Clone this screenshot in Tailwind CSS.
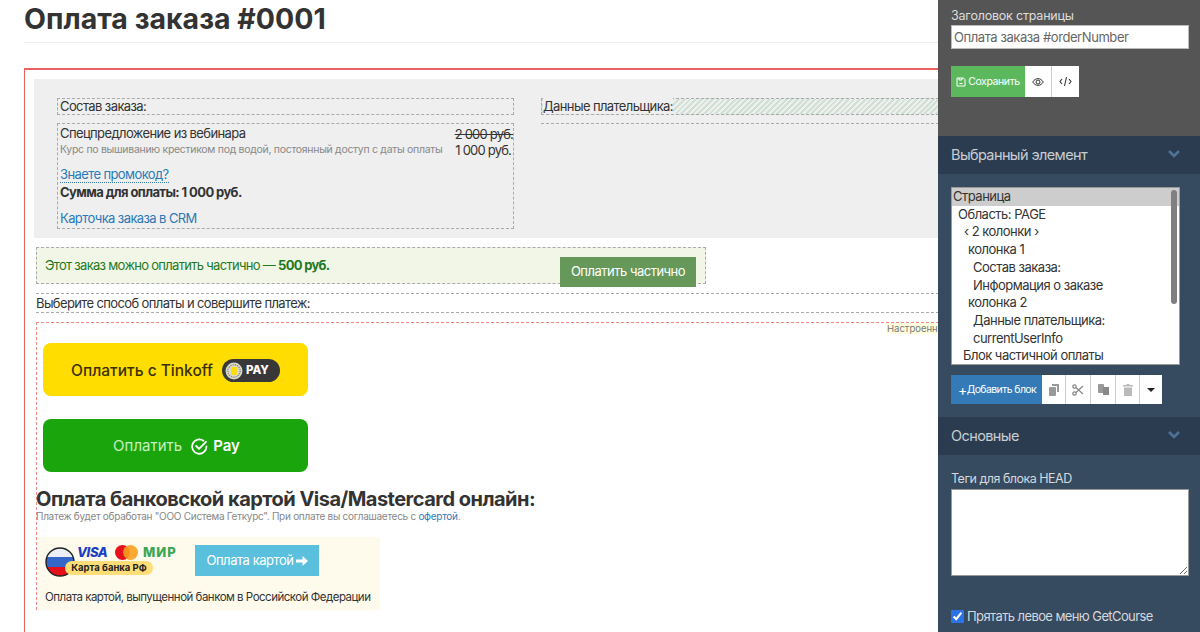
<!DOCTYPE html>
<html lang="ru">
<head>
    <meta charset="UTF-8">
    <title>Оплата заказа</title>
    <script src="https://cdn.jsdelivr.net/npm/@tailwindcss/browser@4"></script>
</head>
<body class="bg-white font-['Inter','Noto_Sans',sans-serif] text-[#333]">
<div class="flex h-[632px] w-[1200px] overflow-hidden">

    <!-- Page content -->
    <main class="h-full w-[938px] shrink-0 overflow-hidden pl-6">
        <h1 class="h-[43px] border-b border-[#eee] text-[28.5px] leading-[37px] font-bold text-[#333]">Оплата заказа #0001</h1>

        <!-- Red page area -->
        <div class="mt-[25px] h-[600px] w-[1000px] border-t-2 border-l border-[#ee5f5f] pt-[9px] pl-[9px]">
            <!-- Two columns -->
            <div class="flex h-[159px] bg-[#efefef] pt-[19px] pl-[23px]">
                <div class="w-[457px] shrink-0 tracking-[-0.6px]">
                    <div class="h-[17px] border border-dashed border-[#aaa] pl-[2px] text-[13px] leading-[15px] text-[#333]">Состав заказа:</div>
                    <div class="relative mt-2 h-[106px] border border-dashed border-[#aaa] pl-[2px]">
                        <div class="text-[13px] leading-[18px]">Спецпредложение из вебинара</div>
                        <div class="mt-[1px] text-[10.5px] leading-[13px] tracking-[-0.3px] text-[#888]">Курс по вышиванию крестиком под водой, постоянный доступ с даты оплаты</div>
                        <div class="absolute top-[1px] right-0 text-[13px] leading-[18px] tracking-[-0.8px] line-through">2 000 руб.</div>
                        <div class="absolute top-[17px] right-[2px] text-[13px] leading-[18px] tracking-[-0.8px]">1 000 руб.</div>
                        <a class="mt-[11px] block w-fit border-b border-dotted border-[#337ab7] text-[13px] leading-[15px] text-[#2a7ab8]" href="#">Знаете промокод?</a>
                        <div class="text-[13px] leading-[18px] font-bold">Сумма для оплаты: 1 000 руб.</div>
                        <a class="mt-[9px] block text-[13px] leading-[16px] text-[#2a7ab8]" href="#">Карточка заказа в CRM</a>
                    </div>
                </div>
                <div class="ml-[27px] flex-1 tracking-[-0.6px]">
                    <div class="h-[17px] border border-dashed border-[#aaa] bg-[repeating-linear-gradient(135deg,#cfe0d4_0px,#cfe0d4_2px,#efefef_2px,#efefef_4px)] pl-[1px] text-[13px] leading-[15px]"><span class="bg-[#efefef]">Данные плательщика:</span></div>
                    <div class="mt-2 h-0 border-t border-dashed border-[#aaa]"></div>
                </div>
            </div>

            <!-- Partial payment -->
            <div class="mt-[9px] ml-[2px] flex h-[37px] w-[670px] border border-dashed border-[#aaa] bg-[#f2f6e7] pl-2 text-[#1f7a1f]">
                <div class="pt-[9px] text-[13px] leading-4 tracking-[-0.7px]">Этот заказ можно оплатить частично — <b>500 руб.</b></div>
                <button class="absolute mt-[9px] ml-[515px] h-[30px] w-[136px] bg-[#66985a] text-[13px] tracking-[-0.5px] text-white">Оплатить частично</button>
            </div>

            <div class="mt-[9px] ml-[2px] h-5 border-y border-dashed border-[#aaa] text-[13px] leading-[18px] tracking-[-0.62px] text-[#333]">Выберите способ оплаты и совершите платеж:</div>

            <!-- Payment widgets -->
            <div class="relative mt-[9px] ml-[2px] border-t border-l border-dashed border-[#f08a8a] pt-[20px] pl-[6px]">
                <span class="absolute top-0 left-[849px] bg-[#ffffe0] px-[1px] text-[9.5px] leading-[11px] whitespace-nowrap text-[#777]">Настроенные</span>

                <div class="flex h-[53px] w-[265px] items-center justify-center gap-[9px] rounded-lg bg-[#ffdd00] pt-[2px] text-[15.500px] font-medium text-[#3b3000]">
                    Оплатить с Tinkoff
                    <span class="flex h-[23px] w-[58px] items-center gap-[3px] rounded-full bg-[#383838] pl-[3px] text-[11.500px] font-extrabold text-white">
                        <svg width="18" height="18" viewBox="0 0 16 16"><circle cx="8" cy="8" r="7.5" fill="#d8d8c8"/><circle cx="8" cy="8" r="5.5" fill="none" stroke="#777" stroke-dasharray="1 1"/><rect x="5.5" y="4.5" width="5" height="7" fill="#ffdd00"/></svg>
                        PAY
                    </span>
                </div>

                <div class="mt-[23px] flex h-[53px] w-[265px] items-center justify-center rounded-lg bg-[#1aa50c] pt-[1px] pl-[2px] text-[15px] text-[#c5f0c0]">
                    Оплатить
                    <svg class="mr-1 ml-2" width="19" height="19" viewBox="0 0 19 19" fill="none" stroke="#fff" stroke-width="1.8" stroke-linecap="round" stroke-linejoin="round"><path d="M16.5 9.5a7.2 7.2 0 1 1-3-5.8"/><path d="M6.2 9l2.8 2.8 7-7"/></svg>
                    <span class="font-semibold text-white">Pay</span>
                </div>

                <h2 class="mt-4 -ml-[7px] text-[20px] leading-[22px] font-bold tracking-[-0.52px] whitespace-nowrap">Оплата банковской картой Visa/Mastercard онлайн:</h2>
                <p class="-ml-[7px] text-[10px] leading-3 tracking-[-0.28px] text-[#888]">Платеж будет обработан "ООО Система Геткурс". При оплате вы соглашаетесь с <a class="text-[#337ab7]" href="#">офертой</a>.</p>

                <!-- Card payment -->
                <div class="mt-[15px] -ml-[6px] h-[73px] w-[343px] bg-[#fffbec] pt-2 pl-2">
                    <div class="flex items-center">
                        <div class="relative h-[31px] w-[148px] shrink-0">
                            <svg class="absolute top-[2px] left-0" width="30" height="30" viewBox="0 0 30 30"><defs><clipPath id="flag"><circle cx="15" cy="15" r="14"/></clipPath></defs><g clip-path="url(#flag)"><rect width="30" height="10" fill="#eceff5"/><rect y="10" width="30" height="10" fill="#3467c8"/><rect y="20" width="30" height="10" fill="#e5101a"/></g><circle cx="15" cy="15" r="14" fill="none" stroke="#222" stroke-width="1.4"/></svg>
                            <span class="absolute top-0 left-[32px] text-[13px] leading-[15px] font-extrabold tracking-[-0.4px] text-[#1a3fc4] italic">VISA</span>
                            <span class="absolute top-0 left-[70px] h-[15px] w-[15px] rounded-full bg-[#e8101c]"></span>
                            <span class="absolute top-0 left-[78px] h-[15px] w-[15px] rounded-full bg-[#f9a01e]/90"></span>
                            <span class="absolute top-0 left-[98px] text-[13px] leading-[15px] font-extrabold tracking-[1px] text-[#3aa655]">МИР</span>
                            <span class="absolute top-[16px] left-[20px] h-[14px] w-[88px] rounded-full bg-[#ffdd77] text-center text-[9.5px] leading-[14px] font-bold text-[#222]">Карта банка РФ</span>
                        </div>
                        <button class="ml-[2px] flex h-[31px] w-[124px] items-center justify-center gap-[2px] bg-[#5bc0de] pt-[1px] text-[13px] tracking-[-0.45px] text-white">Оплата картой
                            <svg width="12" height="10" viewBox="0 0 12 10" fill="#fff"><path d="M0 3.5h6.5V0L12 5l-5.500 5V6.500H0z"/></svg>
                        </button>
                    </div>
                    <p class="mt-[13px] text-[11.5px] leading-4 tracking-[-0.5px] whitespace-nowrap text-[#333]">Оплата картой, выпущенной банком в Российской Федерации</p>
                </div>
            </div>
        </div>
    </main>

    <!-- Settings panel -->
    <aside class="h-full w-[262px] shrink-0 bg-[#364a60] text-[#d5d9dd]">
        <div class="h-[136px] bg-[#555] px-[13px] pt-[8px]">
            <label class="block text-[12.5px] leading-[15px] tracking-[-0.2px] text-[#ddd]">Заголовок страницы</label>
            <input class="mt-[2px] h-[24px] w-[238px] border border-[#bbb] bg-white px-[2px] text-[13px] tracking-[-0.42px] text-[#666]" value="Оплата заказа #orderNumber">
            <div class="mt-[17px] flex h-[31px]">
                <button class="flex w-[74px] items-center justify-center gap-[2px] bg-[#5cb85c] text-[10.5px] tracking-[-0.4px] text-white">
                    <svg width="10" height="10" viewBox="0 0 10 10" fill="none" stroke="#fff"><path d="M1 1h6.500L9 2.500V9H1z"/><path d="M3 1v2h3V1M3.500 6.500h3" /></svg>
                    Сохранить
                </button>
                <button class="flex w-[27px] items-center justify-center border-r border-[#ccc] bg-white">
                    <svg width="12" height="10" viewBox="0 0 12 10" fill="none" stroke="#333"><path d="M.7 5C3.500.5 8.500.5 11.300 5 8.500 9.500 3.500 9.500.7 5z"/><circle cx="6" cy="5" r="2"/></svg>
                </button>
                <button class="flex w-[27px] items-center justify-center bg-white">
                    <svg width="13" height="11" viewBox="0 0 13 11" fill="none" stroke="#333" stroke-width="1.1"><path d="M3 3L1 5.500 3 8M10 3l2 2.500L10 8M7.500 1L5.500 10"/></svg>
                </button>
            </div>
        </div>

        <div class="flex h-[38px] items-center justify-between bg-[#2c3c50] pr-[20px] pl-[13px] text-[14.5px] tracking-[-0.6px] text-[#c8cdd3]">
            Выбранный элемент
            <svg class="mb-[3px]" width="12" height="8" viewBox="0 0 12 8" fill="none" stroke="#4f7299" stroke-width="2.600"><path d="M1 1l5 5 5-5"/></svg>
        </div>
        <div class="h-[243px] px-[13px] pt-[13px]">
            <!-- Tree select -->
            <div class="relative h-[178px] w-[229px] overflow-hidden border border-[#999] bg-white text-[13px] leading-[17.700px] tracking-[-0.5px] text-[#333]">
                <div class="bg-[#cdcdcd] pl-[1px]">Страница</div>
                <div class="pl-[6px]">Область: PAGE</div>
                <div class="pl-[12px]">‹ 2 колонки ›</div>
                <div class="pl-[16px]">колонка 1</div>
                <div class="pl-[21px]">Состав заказа:</div>
                <div class="pl-[21px]">Информация о заказе</div>
                <div class="pl-[16px]">колонка 2</div>
                <div class="pl-[21px]">Данные плательщика:</div>
                <div class="pl-[21px]">currentUserInfo</div>
                <div class="pl-[11px]">Блок частичной оплаты</div>
                <span class="absolute top-[2px] right-[2px] h-[114px] w-[6px] rounded-full bg-[#808080]"></span>
            </div>
            <div class="mt-[10px] flex h-[29px]">
                <button class="flex w-[91px] items-center bg-[#337ab7] pl-[7px] text-[10.500px] tracking-[-0.6px] whitespace-nowrap text-white"><span class="text-[14px] leading-none">+</span>Добавить блок</button>
                <button class="flex w-[24px] items-center justify-center border-r border-[#ccc] bg-white">
                    <svg width="10" height="12" viewBox="0 0 10 12" fill="#999"><path d="M3 0h7v8H8V2H3z"/><rect y="3" width="7" height="9" rx="1"/></svg>
                </button>
                <button class="flex w-[25px] items-center justify-center border-r border-[#ccc] bg-white">
                    <svg width="12" height="12" viewBox="0 0 12 12" fill="none" stroke="#888" stroke-width="1.200"><circle cx="2.500" cy="2.500" r="1.700"/><circle cx="2.500" cy="9.500" r="1.700"/><path d="M4 3.500L11 10M4 8.500L11 2"/></svg>
                </button>
                <button class="flex w-[25px] items-center justify-center border-r border-[#ccc] bg-white">
                    <svg width="11" height="11" viewBox="0 0 11 11" fill="#999"><rect width="6" height="9" rx="1"/><rect x="5" y="3" width="6" height="8" fill="#888"/></svg>
                </button>
                <button class="flex w-[24px] items-center justify-center border-r border-[#ccc] bg-white">
                    <svg width="10" height="12" viewBox="0 0 10 12" fill="#bbb"><path d="M3.500 0h3v1H10v1.500H0V1h3.500zM1 3.500h8V12H1z"/></svg>
                </button>
                <button class="flex w-[22px] items-center justify-center bg-white">
                    <svg width="8" height="4" viewBox="0 0 8 4" fill="#222"><path d="M0 0h8L4 4z"/></svg>
                </button>
            </div>
        </div>

        <div class="flex h-[38px] items-center justify-between bg-[#2c3c50] pr-[20px] pl-[13px] text-[14.5px] tracking-[-0.6px] text-[#c8cdd3]">
            Основные
            <svg class="mb-[3px]" width="12" height="8" viewBox="0 0 12 8" fill="none" stroke="#4f7299" stroke-width="2.600"><path d="M1 1l5 5 5-5"/></svg>
        </div>
        <div class="px-[13px] pt-[16px]">
            <label class="block text-[12.500px] leading-[16px] tracking-[-0.5px]">Теги для блока HEAD</label>
            <textarea class="mt-[2px] block h-[87px] w-[238px] border border-[#999] bg-white"></textarea>
            <label class="mt-[32px] flex items-center gap-[3px] text-[13px] leading-[16px] tracking-[-0.6px]">
                <input type="checkbox" checked class="h-[13px] w-[13px] accent-[#2a72e8]">
                Прятать левое меню GetCourse
            </label>
        </div>
    </aside>
</div>
</body>
</html>
